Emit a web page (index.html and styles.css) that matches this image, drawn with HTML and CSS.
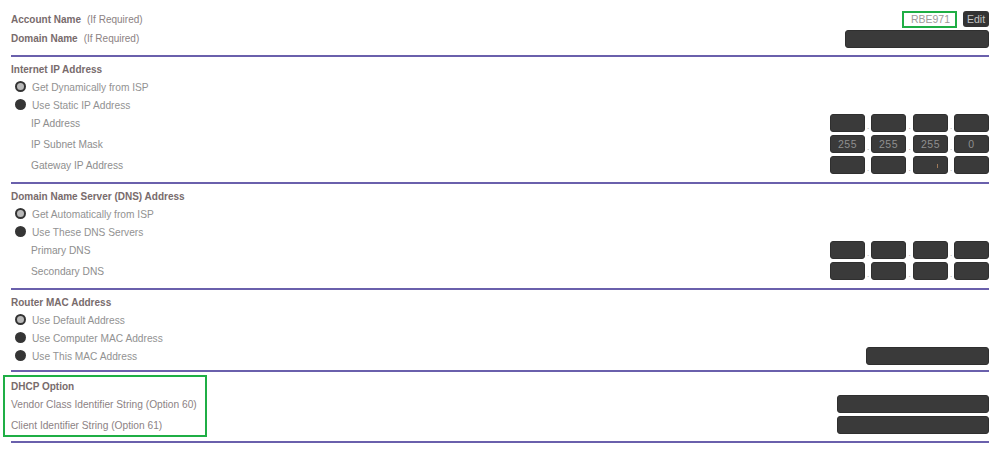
FILE: index.html
```html
<!DOCTYPE html>
<html>
<head>
<meta charset="utf-8">
<link rel="stylesheet" href="styles.css">
</head>
<body>
<div class="page">
  <section class="sec sec-top">
    <div class="row row-acct">
      <div class="lbl"><b class="hd">Account Name</b><span class="req">(If Required)</span></div>
      <div class="ctrl"><span class="acct-val">RBE971</span><span class="edit">Edit</span></div>
    </div>
    <div class="row row-dom">
      <div class="lbl"><b class="hd">Domain Name</b><span class="req">(If Required)</span></div>
      <div class="ctrl"><span class="inp inp-dom"></span></div>
    </div>
  </section>

  <section class="sec">
    <div class="row"><b class="hd">Internet IP Address</b></div>
    <div class="row"><span class="radio on"></span><span class="opt">Get Dynamically from ISP</span></div>
    <div class="row"><span class="radio"></span><span class="opt">Use Static IP Address</span></div>
    <div class="row irow">
      <span class="sub">IP Address</span>
      <div class="ip"><span class="box"></span><span class="dot">.</span><span class="box"></span><span class="dot">.</span><span class="box"></span><span class="dot">.</span><span class="box"></span></div>
    </div>
    <div class="row irow">
      <span class="sub">IP Subnet Mask</span>
      <div class="ip"><span class="box">255</span><span class="dot">.</span><span class="box">255</span><span class="dot">.</span><span class="box">255</span><span class="dot">.</span><span class="box">0</span></div>
    </div>
    <div class="row irow">
      <span class="sub">Gateway IP Address</span>
      <div class="ip"><span class="box"></span><span class="dot">.</span><span class="box"></span><span class="dot">.</span><span class="box"><span class="caret"></span></span><span class="dot">.</span><span class="box"></span></div>
    </div>
  </section>

  <section class="sec">
    <div class="row"><b class="hd">Domain Name Server (DNS) Address</b></div>
    <div class="row"><span class="radio on"></span><span class="opt">Get Automatically from ISP</span></div>
    <div class="row"><span class="radio"></span><span class="opt">Use These DNS Servers</span></div>
    <div class="row irow">
      <span class="sub">Primary DNS</span>
      <div class="ip"><span class="box"></span><span class="dot">.</span><span class="box"></span><span class="dot">.</span><span class="box"></span><span class="dot">.</span><span class="box"></span></div>
    </div>
    <div class="row irow">
      <span class="sub">Secondary DNS</span>
      <div class="ip"><span class="box"></span><span class="dot">.</span><span class="box"></span><span class="dot">.</span><span class="box"></span><span class="dot">.</span><span class="box"></span></div>
    </div>
  </section>

  <section class="sec">
    <div class="row"><b class="hd">Router MAC Address</b></div>
    <div class="row"><span class="radio on"></span><span class="opt">Use Default Address</span></div>
    <div class="row"><span class="radio"></span><span class="opt">Use Computer MAC Address</span></div>
    <div class="row row-mac">
      <span class="radio"></span><span class="opt">Use This MAC Address</span>
      <span class="inp inp-mac"></span>
    </div>
  </section>

  <section class="sec sec-dhcp">
    <div class="row"><b class="hd">DHCP Option</b></div>
    <div class="row irow">
      <span class="lbl2">Vendor Class Identifier String (Option 60)</span>
      <span class="inp inp-dhcp"></span>
    </div>
    <div class="row irow">
      <span class="lbl2">Client Identifier String (Option 61)</span>
      <span class="inp inp-dhcp"></span>
    </div>
    <div class="mark"></div>
  </section>
</div>
</body>
</html>
```

FILE: styles.css
```css
html, body {
  margin: 0;
  padding: 0;
  background: #ffffff;
}
body {
  font-family: "Liberation Sans", Arial, sans-serif;
  font-size: 10px;
  color: #8a8a8a;
}
.page {
  padding: 0 10px 0 11px;
}
.sec {
  border-bottom: 2px solid #6a60ac;
  padding: 3px 0 5px;
  position: relative;
}
.sec-top {
  padding: 9px 0 7px;
}
.row {
  height: 18px;
  display: flex;
  align-items: center;
}
.irow {
  height: 18px;
  margin-bottom: 3px;
}
.hd {
  font-weight: bold;
  color: #786b6c;
}
.req {
  color: #8c8283;
  margin-left: 6px;
}
.lbl {
  flex: 1;
}
.ctrl {
  display: flex;
  align-items: center;
  gap: 6px;
}
.row-acct {
  height: 20px;
}
.row-dom {
  height: 19px;
  align-items: flex-end;
}
.row-dom .lbl {
  align-self: center;
  margin-top: -1px;
}
.acct-val {
  box-sizing: border-box;
  width: 55px;
  height: 17px;
  border: 2px solid #1fae45;
  color: #a09a9a;
  text-align: right;
  padding-right: 5px;
  line-height: 13px;
  font-size: 10.5px;
}
.edit {
  box-sizing: border-box;
  width: 26px;
  height: 16px;
  background: #333333;
  border-radius: 3px;
  color: #c4c4c4;
  text-align: center;
  line-height: 16px;
  font-size: 10.5px;
}
.inp {
  display: block;
  box-sizing: border-box;
  height: 18px;
  background: #3a3a3a;
  border: 1px solid #2f2f2f;
  border-radius: 3px;
}
.inp-dom { width: 144px; }
.inp-mac { width: 123px; margin-left: auto; }
.inp-dhcp { width: 152px; margin-left: auto; }
.radio {
  box-sizing: border-box;
  width: 11px;
  height: 11px;
  border-radius: 50%;
  background: #353535;
  margin-left: 4px;
  margin-right: 6px;
  margin-top: -2px;
}
.radio.on {
  background: #b9b9b9;
  border: 2px solid #333333;
}
.opt {
  color: #929292;
  font-size: 10.2px;
}
.sub {
  margin-left: 20px;
  flex: 1;
  color: #8e8e8e;
  font-size: 10.2px;
}
.lbl2 {
  color: #8c8284;
  font-size: 10.2px;
}
.ip {
  display: flex;
  align-items: flex-end;
}
.box {
  position: relative;
  box-sizing: border-box;
  width: 35px;
  height: 18px;
  background: #3a3a3a;
  border: 1px solid #2f2f2f;
  border-radius: 3px;
  color: #8f8f8f;
  font-size: 10.5px;
  letter-spacing: 0.5px;
  text-align: center;
  line-height: 16px;
}
.dot {
  width: 6px;
  text-align: center;
  color: #9a9a9a;
  font-size: 8px;
  line-height: 10px;
}
.ip .dot:nth-child(4) {
  width: 7px;
}
.caret {
  position: absolute;
  left: 23px;
  top: 7px;
  width: 1px;
  height: 4px;
  background: #a07a5a;
}
.sec-dhcp {
  padding: 5px 0 4px;
}
.mark {
  position: absolute;
  left: -8px;
  top: 3px;
  width: 204px;
  height: 62px;
  box-sizing: border-box;
  border: 2px solid #1fae45;
}
```
